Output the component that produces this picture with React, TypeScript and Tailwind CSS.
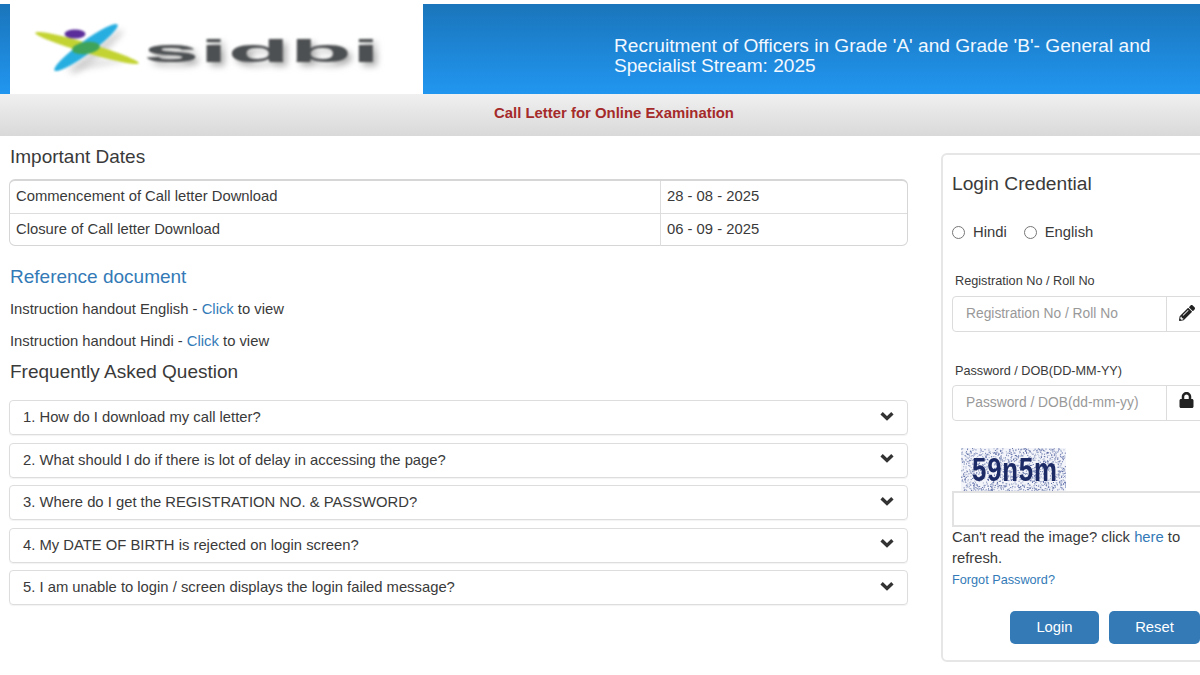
import React from "react";
import { FaLock, FaPencilAlt } from "react-icons/fa";

const faqs = [
  "1. How do I download my call letter?",
  "2. What should I do if there is lot of delay in accessing the page?",
  "3. Where do I get the REGISTRATION NO. & PASSWORD?",
  "4. My DATE OF BIRTH is rejected on login screen?",
  "5. I am unable to login / screen displays the login failed message?",
];

function Logo() {
  return (
    <svg width="413" height="90" viewBox="0 0 413 90" className="block">
      <ellipse cx="87" cy="48" rx="34" ry="5" transform="rotate(-40 87 48)" fill="#aaaaaa" opacity="0.5" style={{ filter: "blur(3px)" }} />
      <ellipse cx="85" cy="60" rx="30" ry="3" transform="rotate(-8 85 60)" fill="#bbbbbb" opacity="0.5" style={{ filter: "blur(3px)" }} />
      <g style={{ filter: "blur(0.9px)" }}>
        <ellipse cx="77" cy="44" rx="54" ry="5" transform="rotate(16.5 77 44)" fill="#c3d332" />
        <ellipse cx="76" cy="43.5" rx="39" ry="6.5" transform="rotate(-36 76 43.5)" fill="#27aee0" />
        <ellipse cx="76" cy="44" rx="14" ry="6" transform="rotate(-8 76 44)" fill="#3fa45a" />
        <ellipse cx="65" cy="30" rx="10.5" ry="4.5" fill="#5b2d9a" />
      </g>
      <text
        x="133"
        y="58"
        textLength="237"
        lengthAdjust="spacingAndGlyphs"
        fontFamily="'Liberation Sans', sans-serif"
        fontWeight="700"
        fontSize="31"
        fill="#4d5052"
        style={{ filter: "blur(0.8px) drop-shadow(4px 4px 3px rgba(120,120,120,0.6))" }}
      >
        sidbi
      </text>
    </svg>
  );
}

function Captcha() {
  const dots: React.ReactElement[] = [];
  let s = 12345;
  const r = () => {
    s = (s * 1103515245 + 12345) & 0x7fffffff;
    return s / 0x7fffffff;
  };
  for (let i = 0; i < 1300; i++) {
    dots.push(
      <rect
        key={i}
        x={r() * 105}
        y={r() * 43}
        width="1"
        height="1"
        fill={r() > 0.5 ? "#5a6aa5" : "#9aa6c8"}
      />
    );
  }
  return (
    <div className="relative h-[43px] w-[105px] overflow-hidden bg-[#f4f5fa]">
      <svg width="105" height="43" className="block">
        {dots}
      </svg>
      <span className="absolute left-[11px] top-[2px] origin-left scale-x-[0.76] whitespace-nowrap font-['Liberation_Sans',sans-serif] text-[34px] font-bold leading-[38px] tracking-[1px] text-[#1c2a66]">
        59n5m
      </span>
    </div>
  );
}

function Chevron() {
  return (
    <svg width="14" height="10" viewBox="0 0 14 10" className="mb-[4px] shrink-0">
      <path d="M1.6 2.2 L7 7.4 L12.4 2.2" fill="none" stroke="#333333" strokeWidth="3.4" />
    </svg>
  );
}

export default function App() {
  return (
    <div className="flex h-[675px] w-[1200px] flex-col overflow-hidden bg-white font-['Liberation_Sans',sans-serif] text-[14.8px] text-[#3a3a3a]">
      <div className="mt-1 flex h-[90px] shrink-0 items-center bg-gradient-to-b from-[#1a75bb] to-[#2196f0] pl-[10px]">
        <div className="h-[90px] w-[413px] shrink-0 bg-white">
          <Logo />
        </div>
        <div className="ml-[191px] w-[560px] pt-[14px] text-[19.1px] leading-[20px] text-[#f2f8ff]">
          Recruitment of Officers in Grade 'A' and Grade 'B'- General and Specialist Stream: 2025
        </div>
      </div>

      <div className="flex h-[42px] shrink-0 items-center justify-center bg-gradient-to-b from-[#f0f0f0] to-[#d9d9d9] pb-[3px] pl-[28px] text-[14.9px] font-bold text-[#a52a2a]">
        Call Letter for Online Examination
      </div>

      <div className="flex min-h-0 flex-1 pl-[9px]">
        <div className="w-[899px] shrink-0 pt-[10px]">
          <h2 className="pl-px text-[19px] leading-[22px]">Important Dates</h2>
          <div className="mt-[11px] h-[67px] rounded-[6px] border border-t-2 border-[#d6d6d6]">
            <div className="flex h-[33px] border-b border-[#dddddd]">
              <div className="flex w-[651px] items-center border-r border-[#dddddd] pb-[2px] pl-[6px]">
                Commencement of Call letter Download
              </div>
              <div className="flex flex-1 items-center pb-[2px] pl-[6px]">28 - 08 - 2025</div>
            </div>
            <div className="flex h-[32px]">
              <div className="flex w-[651px] items-center border-r border-[#dddddd] pb-[2px] pl-[6px]">
                Closure of Call letter Download
              </div>
              <div className="flex flex-1 items-center pb-[2px] pl-[6px]">06 - 09 - 2025</div>
            </div>
          </div>

          <h2 className="mt-[20px] pl-px text-[19px] leading-[22px] text-[#337ab7]">Reference document</h2>
          <p className="mt-[10px] pl-px leading-[22px]">
            Instruction handout English - <a className="text-[#337ab7]">Click</a> to view
          </p>
          <p className="mt-[10px] pl-px leading-[22px]">
            Instruction handout Hindi - <a className="text-[#337ab7]">Click</a> to view
          </p>
          <h2 className="mt-[9px] pl-px text-[19px] leading-[22px]">Frequently Asked Question</h2>

          <div className="mt-[17px] flex flex-col gap-[7.5px]">
            {faqs.map((q) => (
              <div
                key={q}
                className="flex h-[35px] items-center justify-between rounded-[4px] border border-[#dddddd] pl-[13px] pr-[13px] shadow-[0_1px_1px_rgba(0,0,0,0.05)]"
              >
                <span>{q}</span>
                <Chevron />
              </div>
            ))}
          </div>
        </div>

        <div className="ml-[33px] mt-[17px] h-[509px] w-[280px] shrink-0 rounded-[6px] border-2 border-[#e6e6e6] pl-[9px] pt-[17px]">
          <h2 className="text-[19.2px] leading-[24px]">Login Credential</h2>

          <div className="mt-[24px] flex h-[24px] items-center">
            <input type="radio" name="lang" className="m-0 h-[13px] w-[13px] appearance-none rounded-full border border-[#767676] bg-white" />
            <span className="ml-[8px]">Hindi</span>
            <input type="radio" name="lang" className="ml-[17px] h-[13px] w-[13px] appearance-none rounded-full border border-[#767676] bg-white" />
            <span className="ml-[8px]">English</span>
          </div>

          <div className="mt-[27px] pl-[3px] text-[12.7px] leading-[20px]">Registration No / Roll No</div>
          <div className="mt-[5px] flex h-[36px] w-[280px] rounded-[4px] border border-[#dcdcdc]">
            <div className="flex w-[214px] items-center border-r border-[#dcdcdc] pl-[13px] text-[13.8px] text-[#999999]">
              Registration No / Roll No
            </div>
            <div className="pl-[12px] pt-[8px]">
              <FaPencilAlt className="h-[16px] w-[16px] text-[#222222]" />
            </div>
          </div>

          <div className="mt-[29px] pl-[3px] text-[12.7px] leading-[20px]">Password / DOB(DD-MM-YY)</div>
          <div className="mt-[4px] flex h-[36px] w-[280px] rounded-[4px] border border-[#dcdcdc]">
            <div className="flex w-[214px] items-center border-r border-[#dcdcdc] pl-[13px] text-[13.8px] text-[#999999]">
              Password / DOB(dd-mm-yy)
            </div>
            <div className="pl-[12px] pt-[6px]">
              <FaLock className="h-[16px] w-[15px] text-[#222222]" />
            </div>
          </div>

          <div className="ml-[9px] mt-[27px]">
            <Captcha />
          </div>
          <div className="h-[36px] w-[280px] border-2 border-[#e2e2e2]" />
          <div className="w-[240px] leading-[21px]">
            Can't read the image? click <a className="text-[#337ab7]">here</a> to refresh.
          </div>
          <div className="mt-[1px] text-[12.7px] leading-[20px] text-[#337ab7]">Forgot Password?</div>
          <div className="ml-[58px] mt-[21px] flex gap-[10px]">
            <button className="h-[33px] w-[89px] rounded-[5px] bg-[#337ab7] text-[14.8px] text-white">Login</button>
            <button className="h-[33px] w-[91px] rounded-[5px] bg-[#337ab7] text-[14.8px] text-white">Reset</button>
          </div>
        </div>
      </div>
    </div>
  );
}
